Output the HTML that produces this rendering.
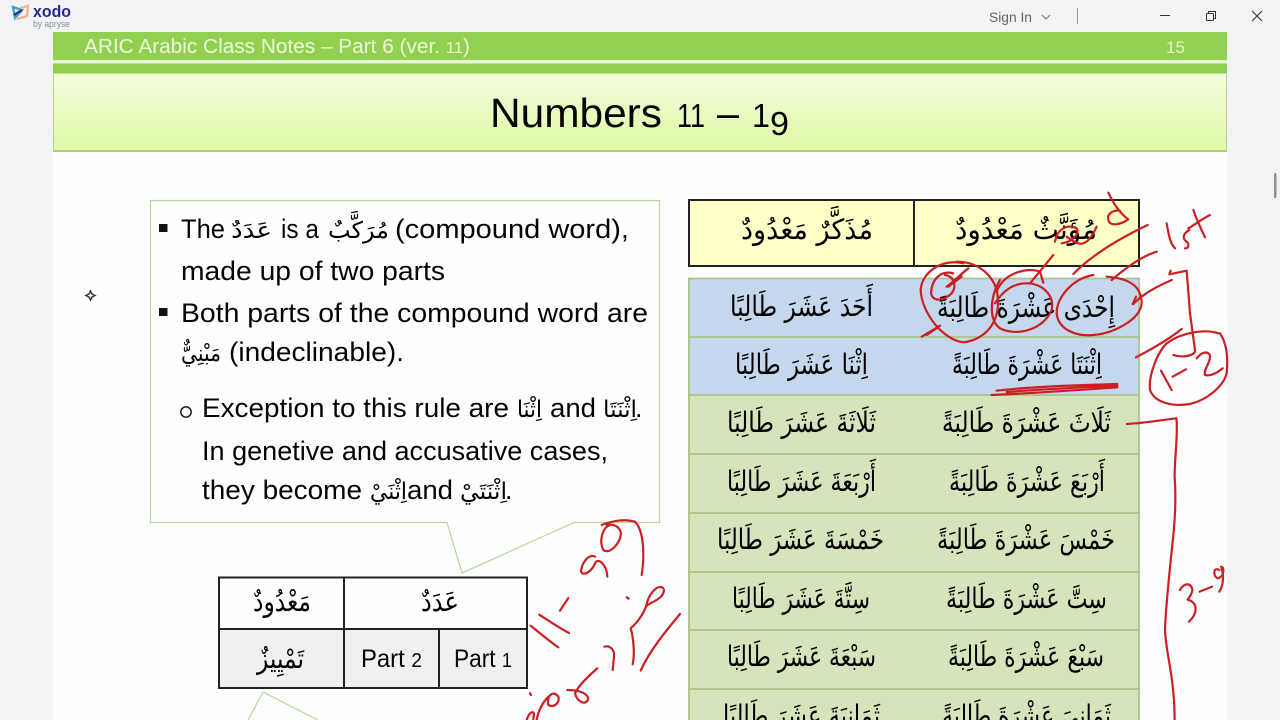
<!DOCTYPE html>
<html lang="en">
<head>
<meta charset="utf-8">
<title>ARIC Arabic Class Notes</title>
<style>
html,body{margin:0;padding:0;width:1280px;height:720px;overflow:hidden;background:#f1f3f4}
svg{display:block}
text{font-family:"Liberation Sans",sans-serif;fill:#050505}
.l{font-size:27px}
.ar{font-family:"DejaVu Sans",sans-serif;font-size:28px;fill:#000}
.as{font-family:"DejaVu Sans",sans-serif;font-size:23px;fill:#000}
.ink path{fill:none;stroke:#cc1f24;stroke-width:2.2;stroke-linecap:round;stroke-linejoin:round;vector-effect:non-scaling-stroke}
</style>
</head>
<body>
<svg width="1280" height="720" viewBox="0 0 1280 720" xmlns="http://www.w3.org/2000/svg">
<defs>
<linearGradient id="tg" x1="0" y1="0" x2="0" y2="1">
<stop offset="0" stop-color="#f2fcdc"/><stop offset="1" stop-color="#dffaa6"/>
</linearGradient>
</defs>
<rect width="1280" height="720" fill="#f1f3f4"/>
<!-- app bar -->
<g fill="none" stroke-width="2.4">
<path d="M13 7 L22 10 L15 18 Z" stroke="#3fa3c9"/>
<path d="M20 8 L28 6 L27 16 L17 19" stroke="#f2b48e"/>
<path d="M14 15 L22 10" stroke="#2b2f8f"/>
</g>
<text x="33" y="17" font-size="17" font-weight="700" style="fill:#2c2a8e" textLength="38" lengthAdjust="spacingAndGlyphs">xodo</text>
<text x="33" y="27" font-size="9" style="fill:#8a8d92" textLength="37" lengthAdjust="spacingAndGlyphs">by apryse</text>
<text x="989" y="22" font-size="14" style="fill:#666" textLength="43" lengthAdjust="spacingAndGlyphs">Sign In</text>
<path d="M1042 15 L1046 19 L1050 15" fill="none" stroke="#777" stroke-width="1"/>
<rect x="1077" y="8" width="1" height="16" fill="#9a9da0"/>
<rect x="1160" y="15" width="10" height="1" fill="#333"/>
<g fill="none" stroke="#333" stroke-width="1"><rect x="1206.5" y="13.5" width="7" height="7" rx="1"/><path d="M1208.5 13.5 V11.5 H1215.5 V18.5 H1213.5"/></g>
<path d="M1252 11 L1262 21 M1262 11 L1252 21" stroke="#333" stroke-width="1.1"/>
<rect x="1274" y="173" width="2.5" height="25" rx="1" fill="#8f9396"/>
<!-- slide -->
<rect x="53" y="32" width="1174" height="688" fill="#fdfefe"/>
<rect x="53" y="32" width="1174" height="28" fill="#92d050"/>
<rect x="53" y="60" width="1174" height="3.5" fill="#e6f5d4"/>
<rect x="53" y="63.5" width="1174" height="10" fill="#90cf4e"/>
<rect x="53" y="73.5" width="1174" height="77" fill="url(#tg)"/>
<rect x="53" y="150" width="1174" height="2" fill="#b3c880"/>
<rect x="53" y="73" width="1" height="78" fill="#bcd08c"/>
<rect x="1226" y="73" width="1" height="78" fill="#bcd08c"/>
<text x="84" y="53" font-size="20" style="fill:#eef8dc" textLength="386" lengthAdjust="spacingAndGlyphs">ARIC Arabic Class Notes – Part 6 (ver. <tspan font-size="16">11</tspan>)</text>
<text x="1166" y="53" font-size="17" style="fill:#e8f6d0" textLength="19" lengthAdjust="spacingAndGlyphs">15</text>
<text x="490" y="127" font-size="41" textLength="172" lengthAdjust="spacingAndGlyphs">Numbers</text>
<text x="677" y="127" font-size="33" textLength="28" lengthAdjust="spacingAndGlyphs">11</text>
<text x="717" y="127" font-size="41" textLength="22" lengthAdjust="spacingAndGlyphs">–</text>
<text x="752" y="127" font-size="33" textLength="18" lengthAdjust="spacingAndGlyphs">1</text>
<text x="770" y="135" font-size="33" textLength="19" lengthAdjust="spacingAndGlyphs">9</text>
<!-- sparkle -->
<path d="M90.5 291 L92 294 L95 295.5 L92 297 L90.5 300 L89 297 L86 295.5 L89 294 Z" fill="none" stroke="#333" stroke-width="1.5"/>
<!-- left callout -->
<path d="M150.5 200.5 H659.5 V522.5 H574 L462 573 L447 522.5 H150.5 Z" fill="#fdfefe" stroke="#bdd39a" stroke-width="1.2"/>
<rect x="159" y="224" width="8.5" height="8" fill="#111"/>
<rect x="159" y="308" width="8.5" height="8" fill="#111"/>
<circle cx="186" cy="412" r="5.2" fill="none" stroke="#111" stroke-width="1.4"/>
<text class="l" x="181" y="238" textLength="44" lengthAdjust="spacingAndGlyphs">The</text>
<text class="as" lang="ar" x="231" y="238" textLength="41" lengthAdjust="spacingAndGlyphs">عَدَدٌ</text>
<text class="l" x="281" y="238" textLength="38" lengthAdjust="spacingAndGlyphs">is a</text>
<text class="as" lang="ar" x="328" y="238" textLength="61" lengthAdjust="spacingAndGlyphs">مُرَكَّبٌ</text>
<text class="l" x="395" y="238" textLength="234" lengthAdjust="spacingAndGlyphs">(compound word),</text>
<text class="l" x="181" y="280" textLength="264" lengthAdjust="spacingAndGlyphs">made up of two parts</text>
<text class="l" x="181" y="322" textLength="467" lengthAdjust="spacingAndGlyphs">Both parts of the compound word are</text>
<text class="as" lang="ar" x="181" y="361" textLength="40" lengthAdjust="spacingAndGlyphs">مَبْنِيٌّ</text>
<text class="l" x="229" y="361" textLength="175" lengthAdjust="spacingAndGlyphs">(indeclinable).</text>
<text class="l" x="202" y="417" textLength="307" lengthAdjust="spacingAndGlyphs">Exception to this rule are</text>
<text class="as" lang="ar" x="517" y="417" textLength="25" lengthAdjust="spacingAndGlyphs">اِثْنَا</text>
<text class="l" x="550" y="417" textLength="46" lengthAdjust="spacingAndGlyphs">and</text>
<text class="as" lang="ar" x="603" y="417" textLength="34" lengthAdjust="spacingAndGlyphs">اِثْنَتَا</text>
<text class="l" x="635" y="417">.</text>
<text class="l" x="202" y="460" textLength="406" lengthAdjust="spacingAndGlyphs">In genetive and accusative cases,</text>
<text class="l" x="202" y="499" textLength="160" lengthAdjust="spacingAndGlyphs">they become</text>
<text class="as" lang="ar" x="370" y="499" textLength="37" lengthAdjust="spacingAndGlyphs">اِثْنَيْ</text>
<text class="l" x="407" y="499" textLength="46" lengthAdjust="spacingAndGlyphs">and</text>
<text class="as" lang="ar" x="460" y="499" textLength="47" lengthAdjust="spacingAndGlyphs">اِثْنَتَيْ</text>
<text class="l" x="505" y="499">.</text>
<!-- small table -->
<rect x="219" y="629" width="308" height="59" fill="#f0f0f0"/>
<g fill="none" stroke="#222" stroke-width="2">
<rect x="219" y="577.5" width="308" height="110.5"/>
<path d="M219 629 H527 M344 577 V688 M439 629 V688"/>
</g>
<text class="ar" lang="ar" x="421" y="611" textLength="38" lengthAdjust="spacingAndGlyphs">عَدَدٌ</text>
<text class="ar" lang="ar" x="253" y="611" textLength="58" lengthAdjust="spacingAndGlyphs">مَعْدُودٌ</text>
<text class="ar" lang="ar" x="257" y="668" textLength="47" lengthAdjust="spacingAndGlyphs">تَمْيِيزٌ</text>
<text x="361" y="667" font-size="25" textLength="61" lengthAdjust="spacingAndGlyphs">Part <tspan font-size="20">2</tspan></text>
<text x="454" y="667" font-size="25" textLength="58" lengthAdjust="spacingAndGlyphs">Part <tspan font-size="20">1</tspan></text>
<path d="M248 720 L263 692 L318 720" fill="none" stroke="#bdd39a" stroke-width="1.2"/>
<!-- right header table -->
<rect x="689" y="200" width="450" height="66" fill="#ffffc8" stroke="#222" stroke-width="2"/>
<path d="M914 200 V266" stroke="#222" stroke-width="2"/>
<text class="ar" lang="ar" x="741" y="239" textLength="132" lengthAdjust="spacingAndGlyphs">مُذَكَّرٌ مَعْدُودٌ</text>
<text class="ar" lang="ar" x="955" y="239" textLength="142" lengthAdjust="spacingAndGlyphs">مُؤَنَّثٌ مَعْدُودٌ</text>
<!-- right numbers table -->
<rect x="688" y="278" width="451" height="117" fill="#c5d7ec"/>
<rect x="688" y="395" width="451" height="325" fill="#d6e4bc"/>
<g stroke="#a9c587" stroke-width="1.8" fill="none">
<path d="M688 278.5 H1139 M688 337 H1139 M688 395 H1139 M688 454 H1139 M688 513 H1139 M688 572 H1139 M688 630 H1139 M688 689 H1139"/>
<path d="M689 278 V720 M1139 278 V720"/>
</g>
<text class="ar" lang="ar" x="937" y="317" textLength="178" lengthAdjust="spacingAndGlyphs">إِحْدَى عَشْرَةَ طَالِبَةً</text>
<text class="ar" lang="ar" x="952" y="374" textLength="150" lengthAdjust="spacingAndGlyphs">اِثْنَتَا عَشْرَةَ طَالِبَةً</text>
<text class="ar" lang="ar" x="942" y="432" textLength="169" lengthAdjust="spacingAndGlyphs">ثَلَاثَ عَشْرَةَ طَالِبَةً</text>
<text class="ar" lang="ar" x="949" y="491" textLength="156" lengthAdjust="spacingAndGlyphs">أَرْبَعَ عَشْرَةَ طَالِبَةً</text>
<text class="ar" lang="ar" x="937" y="549" textLength="178" lengthAdjust="spacingAndGlyphs">خَمْسَ عَشْرَةَ طَالِبَةً</text>
<text class="ar" lang="ar" x="946" y="608" textLength="161" lengthAdjust="spacingAndGlyphs">سِتَّ عَشْرَةَ طَالِبَةً</text>
<text class="ar" lang="ar" x="948" y="666" textLength="156" lengthAdjust="spacingAndGlyphs">سَبْعَ عَشْرَةَ طَالِبَةً</text>
<text class="ar" lang="ar" x="942" y="725" textLength="169" lengthAdjust="spacingAndGlyphs">ثَمَانِيَ عَشْرَةَ طَالِبَةً</text>
<text class="ar" lang="ar" x="730" y="316" textLength="143" lengthAdjust="spacingAndGlyphs">أَحَدَ عَشَرَ طَالِبًا</text>
<text class="ar" lang="ar" x="735" y="374" textLength="133" lengthAdjust="spacingAndGlyphs">اِثْنَا عَشَرَ طَالِبًا</text>
<text class="ar" lang="ar" x="727" y="432" textLength="149" lengthAdjust="spacingAndGlyphs">ثَلَاثَةَ عَشَرَ طَالِبًا</text>
<text class="ar" lang="ar" x="727" y="491" textLength="149" lengthAdjust="spacingAndGlyphs">أَرْبَعَةَ عَشَرَ طَالِبًا</text>
<text class="ar" lang="ar" x="717" y="549" textLength="167" lengthAdjust="spacingAndGlyphs">خَمْسَةَ عَشَرَ طَالِبًا</text>
<text class="ar" lang="ar" x="732" y="608" textLength="138" lengthAdjust="spacingAndGlyphs">سِتَّةَ عَشَرَ طَالِبًا</text>
<text class="ar" lang="ar" x="727" y="666" textLength="149" lengthAdjust="spacingAndGlyphs">سَبْعَةَ عَشَرَ طَالِبًا</text>
<text class="ar" lang="ar" x="723" y="725" textLength="157" lengthAdjust="spacingAndGlyphs">ثَمَانِيَةَ عَشَرَ طَالِبًا</text>
<!-- ink -->
<g class="ink" transform="translate(880,180) scale(.33333)">
<path d="M685 38 C700 70 720 100 745 118 C720 135 690 140 685 120 C680 100 700 90 720 92"/>
<path d="M525 185 C530 150 560 130 590 145 C600 160 580 185 545 190 M560 170 C590 190 610 210 640 160 L650 140"/>
<path d="M803 135 C730 170 640 220 580 282"/>
<path d="M830 215 C780 230 730 270 695 300"/>
<path d="M640 285 C580 295 530 350 530 400 C535 450 590 470 640 465 C700 460 780 420 785 370 C785 320 750 295 680 290"/>
<path d="M360 300 C330 350 325 420 360 445 C410 470 490 450 515 390 C525 340 480 310 440 310 C400 310 370 330 345 370"/>
<path d="M350 335 C370 280 440 260 480 275 L490 308"/>
<path d="M520 225 C500 250 475 280 450 310"/>
<path d="M250 250 C180 235 125 280 122 330 C125 400 190 480 250 487 C310 480 370 430 350 330 C335 280 290 245 230 245"/>
<path d="M220 280 C180 270 155 300 153 340 C160 370 195 360 215 340 C230 320 225 290 195 285"/>
<path d="M265 265 C240 285 220 305 200 320 M245 290 L205 320 M255 272 L215 310"/>
<path d="M125 470 L180 437 M140 465 L170 445"/>
<path d="M350 632 C450 620 600 615 712 612 M335 645 C450 640 600 630 712 622 M380 636 C480 628 600 622 712 617"/>
</g>
<g class="ink" transform="translate(1100,180) scale(.33333)">
<path d="M200 130 C205 160 210 190 225 205"/>
<path d="M268 150 C250 160 245 175 260 185 C270 195 265 205 255 205"/>
<path d="M280 90 C290 120 305 150 315 172 M265 145 C290 130 310 115 330 105"/>
<path d="M212 272 L208 283 L260 272 L270 400 L285 510 C290 525 250 535 220 525"/>
<path d="M215 300 C180 315 130 340 100 372 M108 350 L98 372"/>
<path d="M245 447 C210 475 150 510 108 532"/>
<path d="M355 460 C310 445 240 460 200 490 C170 520 145 590 150 630 C165 670 220 680 270 672 C320 660 370 620 380 580 C385 530 380 490 360 460"/>
<path d="M183 572 L215 630 M218 590 L258 568"/>
<path d="M290 535 C310 510 330 515 330 530 C330 550 310 570 315 585 C335 590 355 575 368 565"/>
</g>
<g class="ink" transform="translate(680,390) scale(.35714,.33333)">
<path d="M1252 102 L1275 100 C1310 97 1350 90 1390 85 C1395 130 1385 200 1385 260 C1390 330 1385 400 1380 450 C1370 550 1360 650 1358 720 C1360 790 1385 860 1385 990"/>
<path d="M1400 600 C1410 580 1430 575 1435 600 C1430 625 1415 630 1425 630 C1450 640 1450 670 1425 695"/>
<path d="M1455 605 L1490 590"/>
<path d="M1510 540 C1495 530 1490 555 1505 565 C1525 560 1525 530 1515 530 C1525 560 1520 590 1510 605"/>
</g>
<g class="ink" transform="translate(510,510) scale(.33333)">
<path d="M275 45 C300 35 340 25 375 35 C400 60 405 130 395 195"/>
<path d="M300 45 C280 50 265 90 280 120 C300 135 330 100 333 70 C330 50 310 40 290 45"/>
<path d="M255 140 C235 130 215 160 213 185 C220 200 245 185 255 160 C265 140 290 165 292 200"/>
<path d="M150 302 L175 264"/>
<path d="M88 314 C120 335 150 355 177 369 M62 347 C90 370 120 395 145 412"/>
<path d="M510 312 C470 360 420 420 392 482"/>
<path d="M350 262 L356 266"/>
<path d="M460 235 C445 220 415 250 408 290 C420 275 460 270 462 240"/>
<path d="M408 290 C400 310 385 335 362 355 C370 380 375 430 368 463"/>
<path d="M283 410 C300 405 315 420 312 440 L308 480"/>
<path d="M262 475 C240 495 210 520 195 550 C200 575 230 590 235 565 C230 545 195 540 172 540"/>
<path d="M60 550 L63 555"/>
<path d="M145 560 C130 540 110 555 115 585 C135 595 150 575 145 560 M115 560 C100 575 85 600 80 630 M50 630 C55 615 65 600 72 610 L70 630"/>
</g>
</svg>
</body>
</html>
